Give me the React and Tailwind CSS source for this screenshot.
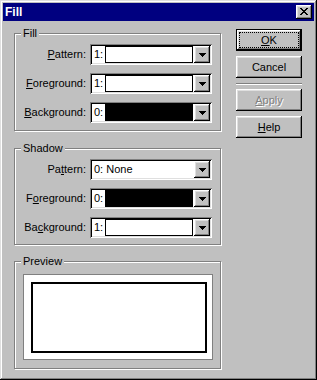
import React from "react";

const raised =
  "shadow-[inset_-1px_-1px_#000,inset_1px_1px_#dfdfdf,inset_-2px_-2px_#808080,inset_2px_2px_#fff]";
const btnRaised =
  "shadow-[inset_-1px_-1px_#000,inset_1px_1px_#fff,inset_-2px_-2px_#808080,inset_2px_2px_#dfdfdf]";
const sunken =
  "shadow-[inset_1px_1px_#808080,inset_-1px_-1px_#fff,inset_2px_2px_#000,inset_-2px_-2px_#dfdfdf]";

function Arrow() {
  return (
    <svg width="7" height="4" viewBox="0 0 7 4" shapeRendering="crispEdges">
      <path d="M0 0h7v1H0z M1 1h5v1H1z M2 2h3v1H2z M3 3h1v1H3z" fill="#000" />
    </svg>
  );
}

function Combo({ num, swatch, text }) {
  return (
    <div className={`w-[122px] h-[21px] p-[2px] bg-white flex ${sunken}`}>
      <span className="pl-[2px] w-[13px] leading-[17px] whitespace-nowrap">
        {text ? text : num}
      </span>
      {!text && (
        <div
          className={`w-[88px] border border-black ${
            swatch === "black" ? "bg-black" : "bg-white"
          }`}
        />
      )}
      <div
        className={`ml-auto w-[16px] h-[17px] bg-[#c0c0c0] flex items-center justify-center pt-[1px] ${btnRaised}`}
      >
        <Arrow />
      </div>
    </div>
  );
}

function Row({ label, combo }) {
  return (
    <div className="flex items-center h-[21px]">
      <div className="w-[71px] text-right leading-[13px] whitespace-nowrap">
        {label}
      </div>
      <div className="ml-[4px]">{combo}</div>
    </div>
  );
}

function Group({ label, className, children }) {
  return (
    <div
      className={`relative border border-[#808080] shadow-[1px_1px_0_#fff,inset_1px_1px_0_#fff] ${className}`}
    >
      <span className="absolute left-[6px] -top-[7px] px-[2px] bg-[#c0c0c0] leading-[13px]">
        {label}
      </span>
      {children}
    </div>
  );
}

function Button({ children, def, disabled }) {
  return (
    <div
      className={`relative w-[66px] h-[22px] bg-[#c0c0c0] flex items-center justify-center leading-[13px] ${
        def ? "border border-black" : ""
      } ${btnRaised}`}
    >
      {def && (
        <span className="absolute inset-x-[2px] inset-y-[2px] border border-dotted border-black" />
      )}
      <span
        className={
          disabled ? "text-[#808080] [text-shadow:1px_1px_0_#fff]" : ""
        }
      >
        {children}
      </span>
    </div>
  );
}

export default function App() {
  return (
    <div
      className={`w-[317px] h-[380px] bg-[#c0c0c0] p-[3px] flex flex-col text-[11px] text-black font-['Liberation_Sans',Arial,sans-serif] ${raised}`}
    >
      <div className="h-[18px] bg-[#000080] flex items-center justify-between pl-[2px] pr-[2px]">
        <span className="text-white font-bold text-[12px] leading-none">
          Fill
        </span>
        <div
          className={`w-[16px] h-[14px] bg-[#c0c0c0] flex items-start justify-start pl-[4px] pt-[3px] ${btnRaised}`}
        >
          <svg width="8" height="7" viewBox="0 0 8 7" shapeRendering="crispEdges">
            <path
              d="M0 0h2v1H0z M6 0h2v1H6z M1 1h2v1H1z M5 1h2v1H5z M2 2h4v1H2z M3 3h2v1H3z M2 4h4v1H2z M1 5h2v1H1z M5 5h2v1H5z M0 6h2v1H0z M6 6h2v1H6z"
              fill="#000"
            />
          </svg>
        </div>
      </div>

      <div className="flex pl-[11px] pt-[8px]">
        <div className="w-[207px] mt-[4px] flex flex-col">
          <Group label="Fill" className="h-[98px] pt-[10px]">
            <div className="flex flex-col gap-[8px]">
              <Row label={<><u>P</u>attern:</>} combo={<Combo num="1:" />} />
              <Row label={<><u>F</u>oreground:</>} combo={<Combo num="1:" />} />
              <Row
                label={<><u>B</u>ackground:</>}
                combo={<Combo num="0:" swatch="black" />}
              />
            </div>
          </Group>

          <Group label="Shadow" className="h-[97px] pt-[10px] mt-[17px]">
            <div className="flex flex-col gap-[8px]">
              <Row label={<>Pa<u>t</u>tern:</>} combo={<Combo text="0: None" />} />
              <Row
                label={<>F<u>o</u>reground:</>}
                combo={<Combo num="0:" swatch="black" />}
              />
              <Row label={<>Ba<u>c</u>kground:</>} combo={<Combo num="1:" />} />
            </div>
          </Group>

          <Group label="Preview" className="h-[108px] mt-[16px] pl-[8px] pt-[12px]">
            <div className="w-[190px] h-[86px] bg-white border border-[#808080] pl-[7px] pt-[7px]">
              <div className="w-[176px] h-[71px] border-2 border-black" />
            </div>
          </Group>
        </div>

        <div className="ml-[15px] w-[66px] flex flex-col">
          <Button def>
            <u>O</u>K
          </Button>
          <div className="mt-[5px]">
            <Button>Cancel</Button>
          </div>
          <div className="mt-[5px] h-[2px] border-t border-[#808080] border-b border-b-white" />
          <div className="mt-[4px]">
            <Button disabled>
              <u>A</u>pply
            </Button>
          </div>
          <div className="mt-[5px]">
            <Button>
              <u>H</u>elp
            </Button>
          </div>
        </div>
      </div>
    </div>
  );
}
